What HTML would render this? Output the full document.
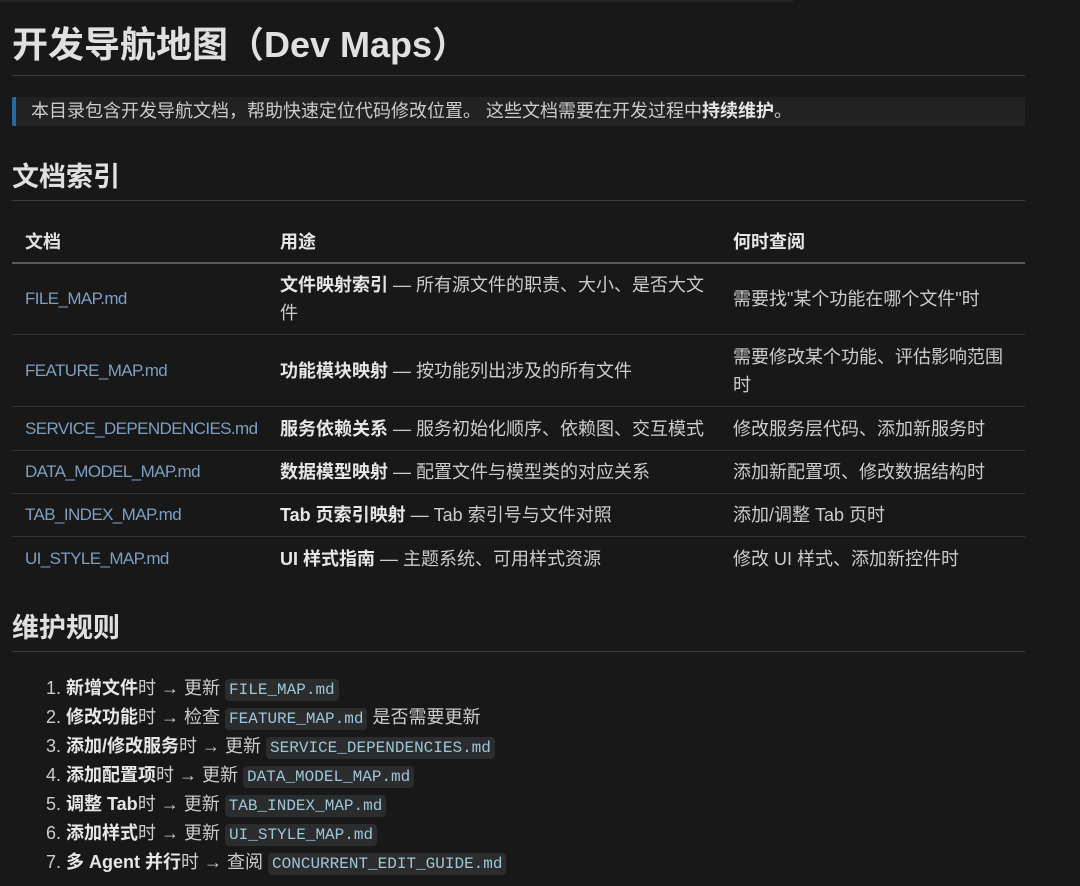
<!DOCTYPE html>
<html><head><meta charset="utf-8"><style>
*{margin:0;padding:0;box-sizing:border-box}
body{width:1080px;height:886px;background:#181818;color:#cccccc;font-family:"Liberation Sans","Noto Sans CJK SC",sans-serif;font-size:18px;position:relative;overflow:hidden}
.a{position:absolute;white-space:nowrap}
h1{position:absolute;left:12px;top:21px;font-size:36px;font-weight:bold;color:#e0e0e0;line-height:48px}
h2{position:absolute;left:12px;font-size:27px;font-weight:bold;color:#e0e0e0;line-height:36px}
.hr{position:absolute;left:12px;width:1013px;height:1px;background:#3c3c3c}
.bq{position:absolute;left:12px;top:97px;width:1013px;height:29px;background:#222;border-left:4px solid #1f6ca8;border-radius:2px;padding-left:15px;line-height:29px;white-space:nowrap}
b{color:#e6e6e6}
.row{position:absolute;left:12px;width:1013px;border-bottom:1px solid #353535}
.c{position:absolute;top:0;height:100%;display:flex;align-items:center;line-height:28px}
.c1{left:13px;color:#7c9fc2;font-size:17px;letter-spacing:-0.6px}.c2{left:268px;width:434px}.c3{left:721px;width:280px}
.li{position:absolute;left:46px;line-height:29px;white-space:nowrap}
code{font-family:"Liberation Mono",monospace;font-size:16px;background:#2a2c2d;color:#9fc6d6;padding:2px 4px;border-radius:4px}
</style></head><body>
<div class="a" style="left:0;top:0;width:793px;height:2px;background:#242424"></div>
<h1>开发导航地图（Dev Maps）</h1>
<div class="hr" style="top:75px"></div>
<div class="bq">本目录包含开发导航文档，帮助快速定位代码修改位置。 这些文档需要在开发过程中<b>持续维护</b>。</div>
<h2 style="top:159px">文档索引</h2>
<div class="hr" style="top:200px"></div>
<div class="row" style="top:222px;height:42px;border-bottom:2px solid #5a5a5a"><div class="c c1" style="color:#e0e0e0;font-weight:bold;font-size:18px;letter-spacing:0">文档</div><div class="c c2"><b>用途</b></div><div class="c c3"><b>何时查阅</b></div></div>
<div class="row" style="top:264px;height:71px"><div class="c c1">FILE_MAP.md</div><div class="c c2"><span><b>文件映射索引</b> — 所有源文件的职责、大小、是否大文件</span></div><div class="c c3">需要找"某个功能在哪个文件"时</div></div>
<div class="row" style="top:335px;height:72px"><div class="c c1">FEATURE_MAP.md</div><div class="c c2"><span><b>功能模块映射</b> — 按功能列出涉及的所有文件</span></div><div class="c c3"><span>需要修改某个功能、评估影响范围时</span></div></div>
<div class="row" style="top:407px;height:44px"><div class="c c1">SERVICE_DEPENDENCIES.md</div><div class="c c2" style="white-space:nowrap"><span><b>服务依赖关系</b> — 服务初始化顺序、依赖图、交互模式</span></div><div class="c c3" style="white-space:nowrap">修改服务层代码、添加新服务时</div></div>
<div class="row" style="top:451px;height:43px"><div class="c c1">DATA_MODEL_MAP.md</div><div class="c c2"><span><b>数据模型映射</b> — 配置文件与模型类的对应关系</span></div><div class="c c3" style="white-space:nowrap">添加新配置项、修改数据结构时</div></div>
<div class="row" style="top:494px;height:43px"><div class="c c1">TAB_INDEX_MAP.md</div><div class="c c2"><span><b>Tab 页索引映射</b> — Tab 索引号与文件对照</span></div><div class="c c3">添加/调整 Tab 页时</div></div>
<div class="row" style="top:537px;height:43px;border-bottom:none"><div class="c c1">UI_STYLE_MAP.md</div><div class="c c2"><span><b>UI 样式指南</b> — 主题系统、可用样式资源</span></div><div class="c c3">修改 UI 样式、添加新控件时</div></div>
<h2 style="top:610px">维护规则</h2>
<div class="hr" style="top:651px"></div>
<div class="li" style="top:674px">1. <b>新增文件</b>时 → 更新 <code>FILE_MAP.md</code></div>
<div class="li" style="top:703px">2. <b>修改功能</b>时 → 检查 <code>FEATURE_MAP.md</code> 是否需要更新</div>
<div class="li" style="top:732px">3. <b>添加/修改服务</b>时 → 更新 <code>SERVICE_DEPENDENCIES.md</code></div>
<div class="li" style="top:761px">4. <b>添加配置项</b>时 → 更新 <code>DATA_MODEL_MAP.md</code></div>
<div class="li" style="top:790px">5. <b>调整 Tab</b>时 → 更新 <code>TAB_INDEX_MAP.md</code></div>
<div class="li" style="top:819px">6. <b>添加样式</b>时 → 更新 <code>UI_STYLE_MAP.md</code></div>
<div class="li" style="top:848px">7. <b>多 Agent 并行</b>时 → 查阅 <code>CONCURRENT_EDIT_GUIDE.md</code></div>
</body></html>
